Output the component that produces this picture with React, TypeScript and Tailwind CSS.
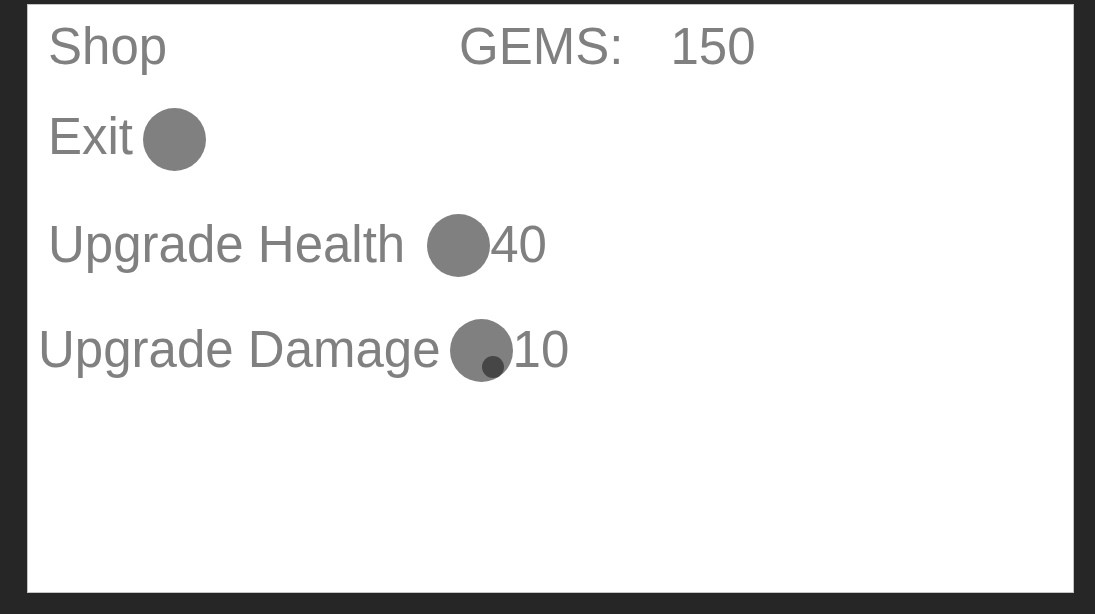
import React from 'react';

const txt = "text-[51px] leading-none text-[#808080] whitespace-nowrap";

function Dot({ children }: { children?: React.ReactNode }) {
  return (
    <div className="relative w-[63px] h-[63px] shrink-0 rounded-full bg-[#808080]">
      {children}
    </div>
  );
}

export default function App() {
  return (
    <main
      className="w-[1095px] h-[614px] bg-[#262626] pl-[27px] pt-[4px]"
      style={{ fontFamily: '"Liberation Sans", Arial, sans-serif' }}
    >
      <div className="w-[1047px] h-[589px] bg-white border border-[#c4c4c4] flex flex-col">
        {/* header */}
        <div className="flex items-start mt-[16px] pl-[20px]">
          <span className={txt}>Shop</span>
          <span className={`${txt} ml-[292px]`}>GEMS:</span>
          <span className={`${txt} ml-[47px]`}>150</span>
        </div>

        <div className="flex items-start mt-[36px] pl-[20px]">
          <span className={`${txt} mt-[3px]`}>Exit</span>
          <div className="ml-[10px]">
            <Dot />
          </div>
        </div>

        <div className="flex items-start mt-[43px] pl-[20px]">
          <span className={`${txt} mt-[5px]`}>Upgrade Health</span>
          <div className="ml-[22px]">
            <Dot />
          </div>
          <span className={`${txt} mt-[5px]`}>40</span>
        </div>

        <div className="flex items-start mt-[42px] pl-[10px]">
          <span className={`${txt} mt-[5px]`}>Upgrade Damage</span>
          <div className="ml-[9px]">
            <Dot>
              {/* cursor marker */}
              <div className="absolute left-[32px] top-[37px] w-[22px] h-[22px] rounded-full bg-[#464646]" />
            </Dot>
          </div>
          <span className={`${txt} mt-[5px]`}>10</span>
        </div>
      </div>
    </main>
  );
}
